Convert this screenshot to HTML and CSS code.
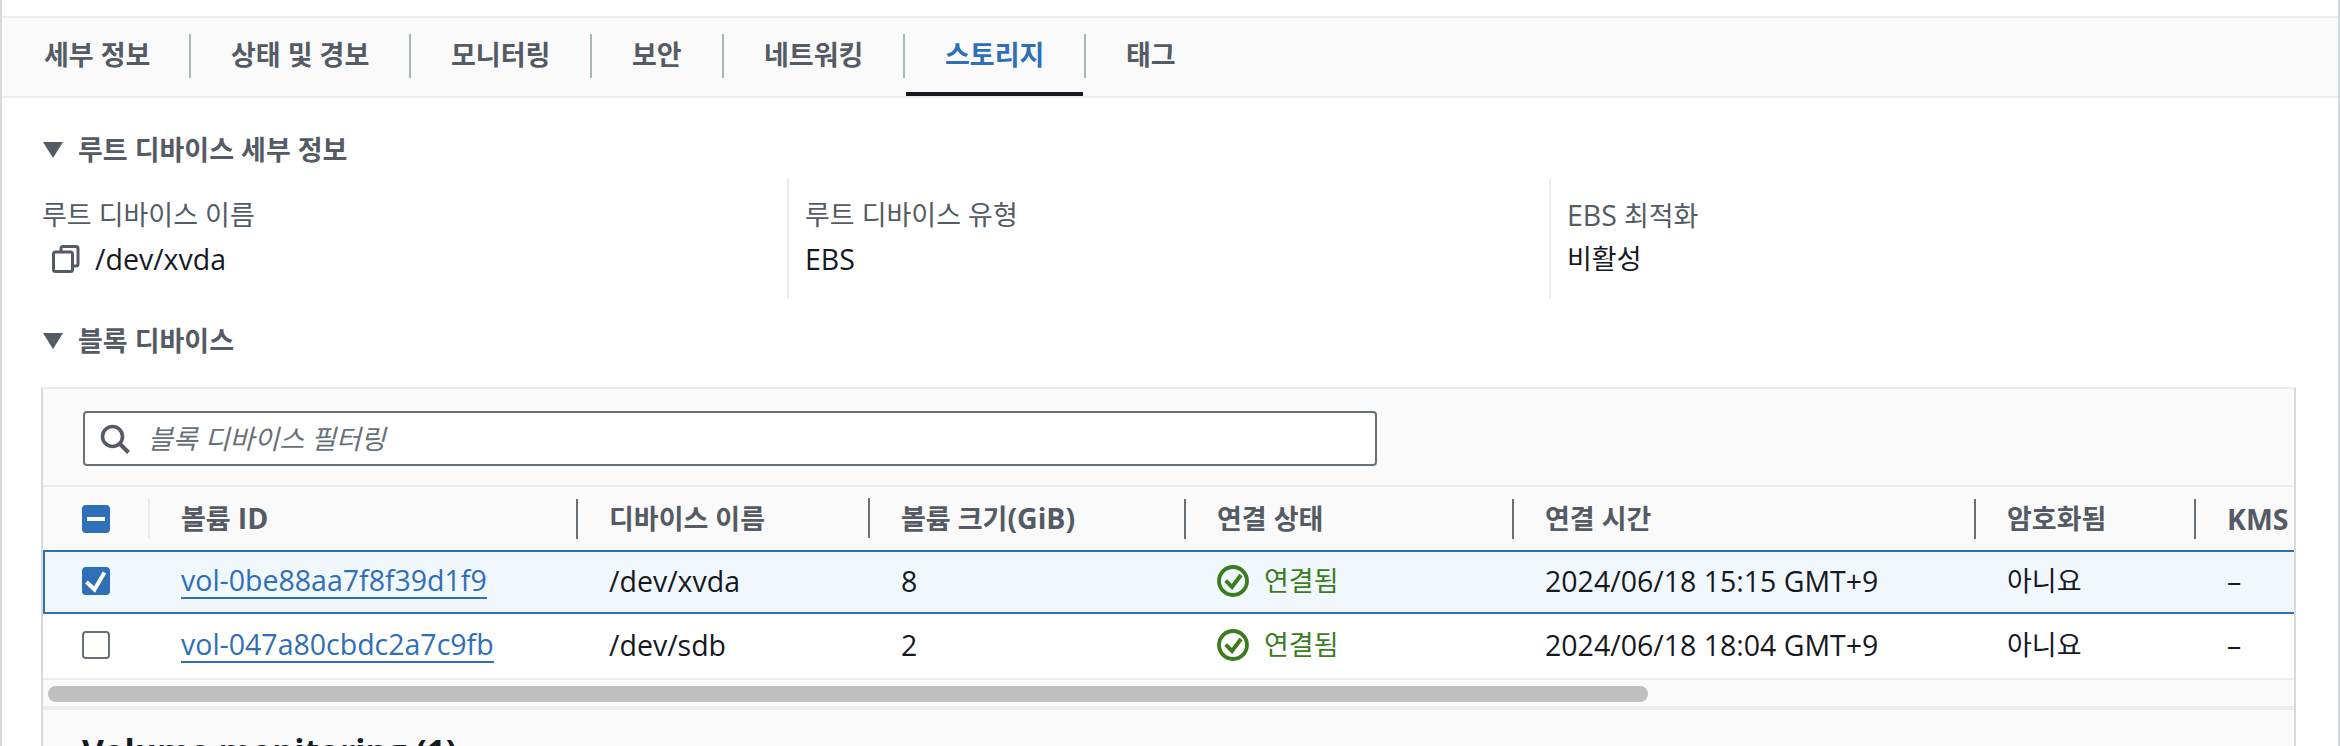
FILE: index.html
```html
<!DOCTYPE html>
<html lang="ko">
<head>
<meta charset="utf-8">
<title>스토리지</title>
<link rel="stylesheet" href="styles.css">
</head>
<body>
<div class="page">
  <nav class="tabs">
    <a class="tab tab-w1">세부 정보</a>
    <a class="tab tab-w2">상태 및 경보</a>
    <a class="tab tab-w3">모니터링</a>
    <a class="tab tab-w4">보안</a>
    <a class="tab tab-w5">네트워킹</a>
    <a class="tab tab-w6 active">스토리지</a>
    <a class="tab tab-w7">태그</a>
  </nav>
  <main class="content">
    <h3 class="section-head first"><span class="caret"></span>루트 디바이스 세부 정보</h3>
    <div class="details">
      <div class="detail">
        <div class="label">루트 디바이스 이름</div>
        <div class="value copy">
          <svg class="copy-icon" viewBox="0 0 28 28" aria-hidden="true"><path d="M9 6V3.5a2 2 0 0 1 2-2h13a2 2 0 0 1 2 2V19a2 2 0 0 1-2 2h-3" fill="none" stroke="#545b64" stroke-width="3"/><rect x="1.5" y="7" width="19" height="19.5" rx="2" fill="none" stroke="#545b64" stroke-width="3"/></svg>
          <span class="latin">/dev/xvda</span>
        </div>
      </div>
      <div class="detail bordered">
        <div class="label">루트 디바이스 유형</div>
        <div class="value latin">EBS</div>
      </div>
      <div class="detail bordered">
        <div class="label"><span class="latin">EBS</span> 최적화</div>
        <div class="value">비활성</div>
      </div>
    </div>
    <h3 class="section-head second"><span class="caret"></span>블록 디바이스</h3>
    <section class="panel">
      <div class="filter-wrap">
        <div class="filter">
          <svg class="search-icon" viewBox="0 0 30 30" aria-hidden="true"><circle cx="12.5" cy="12.5" r="10" fill="none" stroke="#545b64" stroke-width="3.6"/><path d="M19.5 19.5L28.5 28.5" fill="none" stroke="#545b64" stroke-width="4"/></svg>
          <span class="placeholder">블록 디바이스 필터링</span>
        </div>
      </div>
      <div class="row head">
        <div class="cell check-cell"><span class="box checked"><span class="dash"></span></span></div>
        <div class="cell light">볼륨 <span class="latin">ID</span></div>
        <div class="cell">디바이스 이름</div>
        <div class="cell">볼륨 크기<span class="latin">(GiB)</span></div>
        <div class="cell">연결 상태</div>
        <div class="cell">연결 시간</div>
        <div class="cell">암호화됨</div>
        <div class="cell latin">KMS</div>
      </div>
      <div class="row selected">
        <div class="cell check-cell"><span class="box checked"><svg class="tick" viewBox="0 0 28 28" aria-hidden="true"><path d="M4.5 15l8 7.5 10-17" fill="none" stroke="#fff" stroke-width="4"/></svg></span></div>
        <div class="cell latin"><a class="link">vol-0be88aa7f8f39d1f9</a></div>
        <div class="cell latin">/dev/xvda</div>
        <div class="cell latin">8</div>
        <div class="cell status"><svg class="ok" viewBox="0 0 32 32" aria-hidden="true"><circle cx="16" cy="16" r="14" fill="none" stroke="#3b7d1e" stroke-width="3.8"/><path d="M8.7 15.7l6.3 6.3 9-12" fill="none" stroke="#3b7d1e" stroke-width="4"/></svg>연결됨</div>
        <div class="cell latin">2024/06/18 15:15 GMT+9</div>
        <div class="cell">아니요</div>
        <div class="cell latin">–</div>
      </div>
      <div class="row plain">
        <div class="cell check-cell"><span class="box"></span></div>
        <div class="cell latin"><a class="link">vol-047a80cbdc2a7c9fb</a></div>
        <div class="cell latin">/dev/sdb</div>
        <div class="cell latin">2</div>
        <div class="cell status"><svg class="ok" viewBox="0 0 32 32" aria-hidden="true"><circle cx="16" cy="16" r="14" fill="none" stroke="#3b7d1e" stroke-width="3.8"/><path d="M8.7 15.7l6.3 6.3 9-12" fill="none" stroke="#3b7d1e" stroke-width="4"/></svg>연결됨</div>
        <div class="cell latin">2024/06/18 18:04 GMT+9</div>
        <div class="cell">아니요</div>
        <div class="cell latin">–</div>
      </div>
      <div class="scroll-track"><div class="scroll-thumb"></div></div>
      <div class="monitor">Volume monitoring (1)</div>
    </section>
  </main>
</div>
</body>
</html>
```
FILE: styles.css
```css
* { box-sizing: border-box; }
html, body { margin: 0; padding: 0; background: #fff; height: 746px; overflow: hidden; }
body {
  font-family: "Open Sans", "Noto Sans CJK KR", sans-serif;
  font-size: 27px;
  color: #16191f;
  line-height: 34px;
}
.latin { font-size: 28.5px; }
.page {
  height: 746px;
  border-left: 2px solid #d5dbdb;
  border-right: 2px solid #d5dbdb;
  padding-top: 16px;
  overflow: hidden;
}
.tabs {
  display: flex;
  height: 82px;
  background: #fafafa;
  border-top: 2px solid #eaeded;
  border-bottom: 2px solid #eaeded;
  padding-top: 16px;
  font-weight: 700;
  color: #545b64;
}
.tab { display: block; height: 62px; padding-top: 3px; line-height: 36px; padding-left: 42px; position: relative; white-space: nowrap; }
.tab::after { content: ""; position: absolute; top: 0; right: -2px; height: 44px; width: 2px; background: #aab7b8; }
.tab-w1 { width: 187px; }
.tab-w2 { width: 220px; }
.tab-w3 { width: 181px; }
.tab-w4 { width: 132px; }
.tab-w5 { width: 181px; }
.tab-w6 { width: 181px; }
.tab-w7 { width: 120px; }
.tab-w7::after { display: none; }
.tab.active { color: #2e6fb7; }
.tab.active::before { content: ""; position: absolute; left: 3px; right: 1px; bottom: 0; height: 4px; background: #16191f; }
.content { padding-left: 40px; padding-right: 42px; }
.section-head {
  display: flex;
  align-items: center;
  margin: 0;
  font-size: 27px;
  font-weight: 700;
  color: #545b64;
  height: 34px;
}
.section-head.first { margin-top: 35px; }
.section-head.second { margin-top: 26px; }
.caret {
  width: 0; height: 0;
  margin: 0 15px 0 1px;
  border-left: 10px solid transparent;
  border-right: 10px solid transparent;
  border-top: 16px solid #545b64;
}
.details {
  display: grid;
  grid-template-columns: 745px 762px 1fr;
  height: 120px;
  margin-top: 11px;
}
.detail { padding-top: 20px; }
.detail.bordered { border-left: 2px solid #eaeded; padding-left: 16px; }
.label { color: #545b64; height: 34px; }
.value { margin-top: 10px; height: 34px; }
.value.copy { display: flex; align-items: center; padding-left: 10px; }
.copy-icon { width: 28px; height: 28px; margin-right: 15px; flex: none; }
.panel {
  margin-top: 29px;
  margin-left: -1px;
  background: #fafafa;
  border-top: 2px solid #eaeded;
  border-left: 2px solid #d5dbdb;
  border-right: 2px solid #d5dbdb;
  height: 400px;
  overflow: hidden;
}
.filter-wrap { height: 98px; padding: 22px 0 0 40px; border-bottom: 2px solid #eaeded; }
.filter {
  display: flex;
  align-items: center;
  width: 1294px;
  height: 55px;
  background: #fff;
  border: 2px solid #687078;
  border-radius: 4px;
  padding-left: 15px;
}
.search-icon { width: 30px; height: 30px; flex: none; margin-right: 18px; }
.placeholder { font-style: italic; color: #687078; }
.row {
  display: grid;
  grid-template-columns: 105px 428px 292px 316px 328px 462px 220px 1fr;
  align-items: center;
}
.row.head { height: 63px; font-weight: 700; color: #545b64; }
.row.head .cell { position: relative; overflow: visible; }
.row.head .cell:not(.check-cell)::before { content: ""; position: absolute; left: 0; top: -3px; height: 40px; width: 2px; background: #687078; }
.row.head .cell.light::before { background: #eaeded; }
.cell { padding-left: 33px; white-space: nowrap; overflow: hidden; }
.check-cell { padding-left: 39px; display: flex; }
.row.selected { height: 64px; background: #f1f8fd; border: 2px solid #2e6fb7; border-right: 0; padding-bottom: 2px; grid-template-columns: 103px 428px 292px 316px 328px 462px 220px 1fr; }
.row.plain { height: 66px; background: #fff; border-bottom: 2px solid #eaeded; padding-bottom: 2px; }
.row.selected .check-cell { padding-left: 37px; }
.box {
  display: flex; align-items: center; justify-content: center;
  width: 28px; height: 28px;
  border-radius: 4px;
  border: 2px solid #687078;
  background: #fff;
}
.box.checked { background: #2e6fb7; border-color: #2e6fb7; }
.dash { width: 18px; height: 4px; background: #fff; }
.tick { width: 28px; height: 28px; flex: none; }
.link { color: #2e6fb7; border-bottom: 2px solid #2e6fb7; display: inline-block; line-height: 33px; }
.status { display: flex; align-items: center; color: #3b7d1e; }
.ok { width: 32px; height: 32px; flex: none; margin-right: 15px; }
.scroll-track { height: 30px; padding: 6px 0 0 5px; border-bottom: 4px solid #eaeded; }
.scroll-thumb { width: 1600px; height: 16px; border-radius: 8px; background: #bfbfbf; }
.monitor { padding: 21px 0 0 39px; font-size: 33.6px; line-height: 40px; font-weight: 700; color: #16191f; }
```
